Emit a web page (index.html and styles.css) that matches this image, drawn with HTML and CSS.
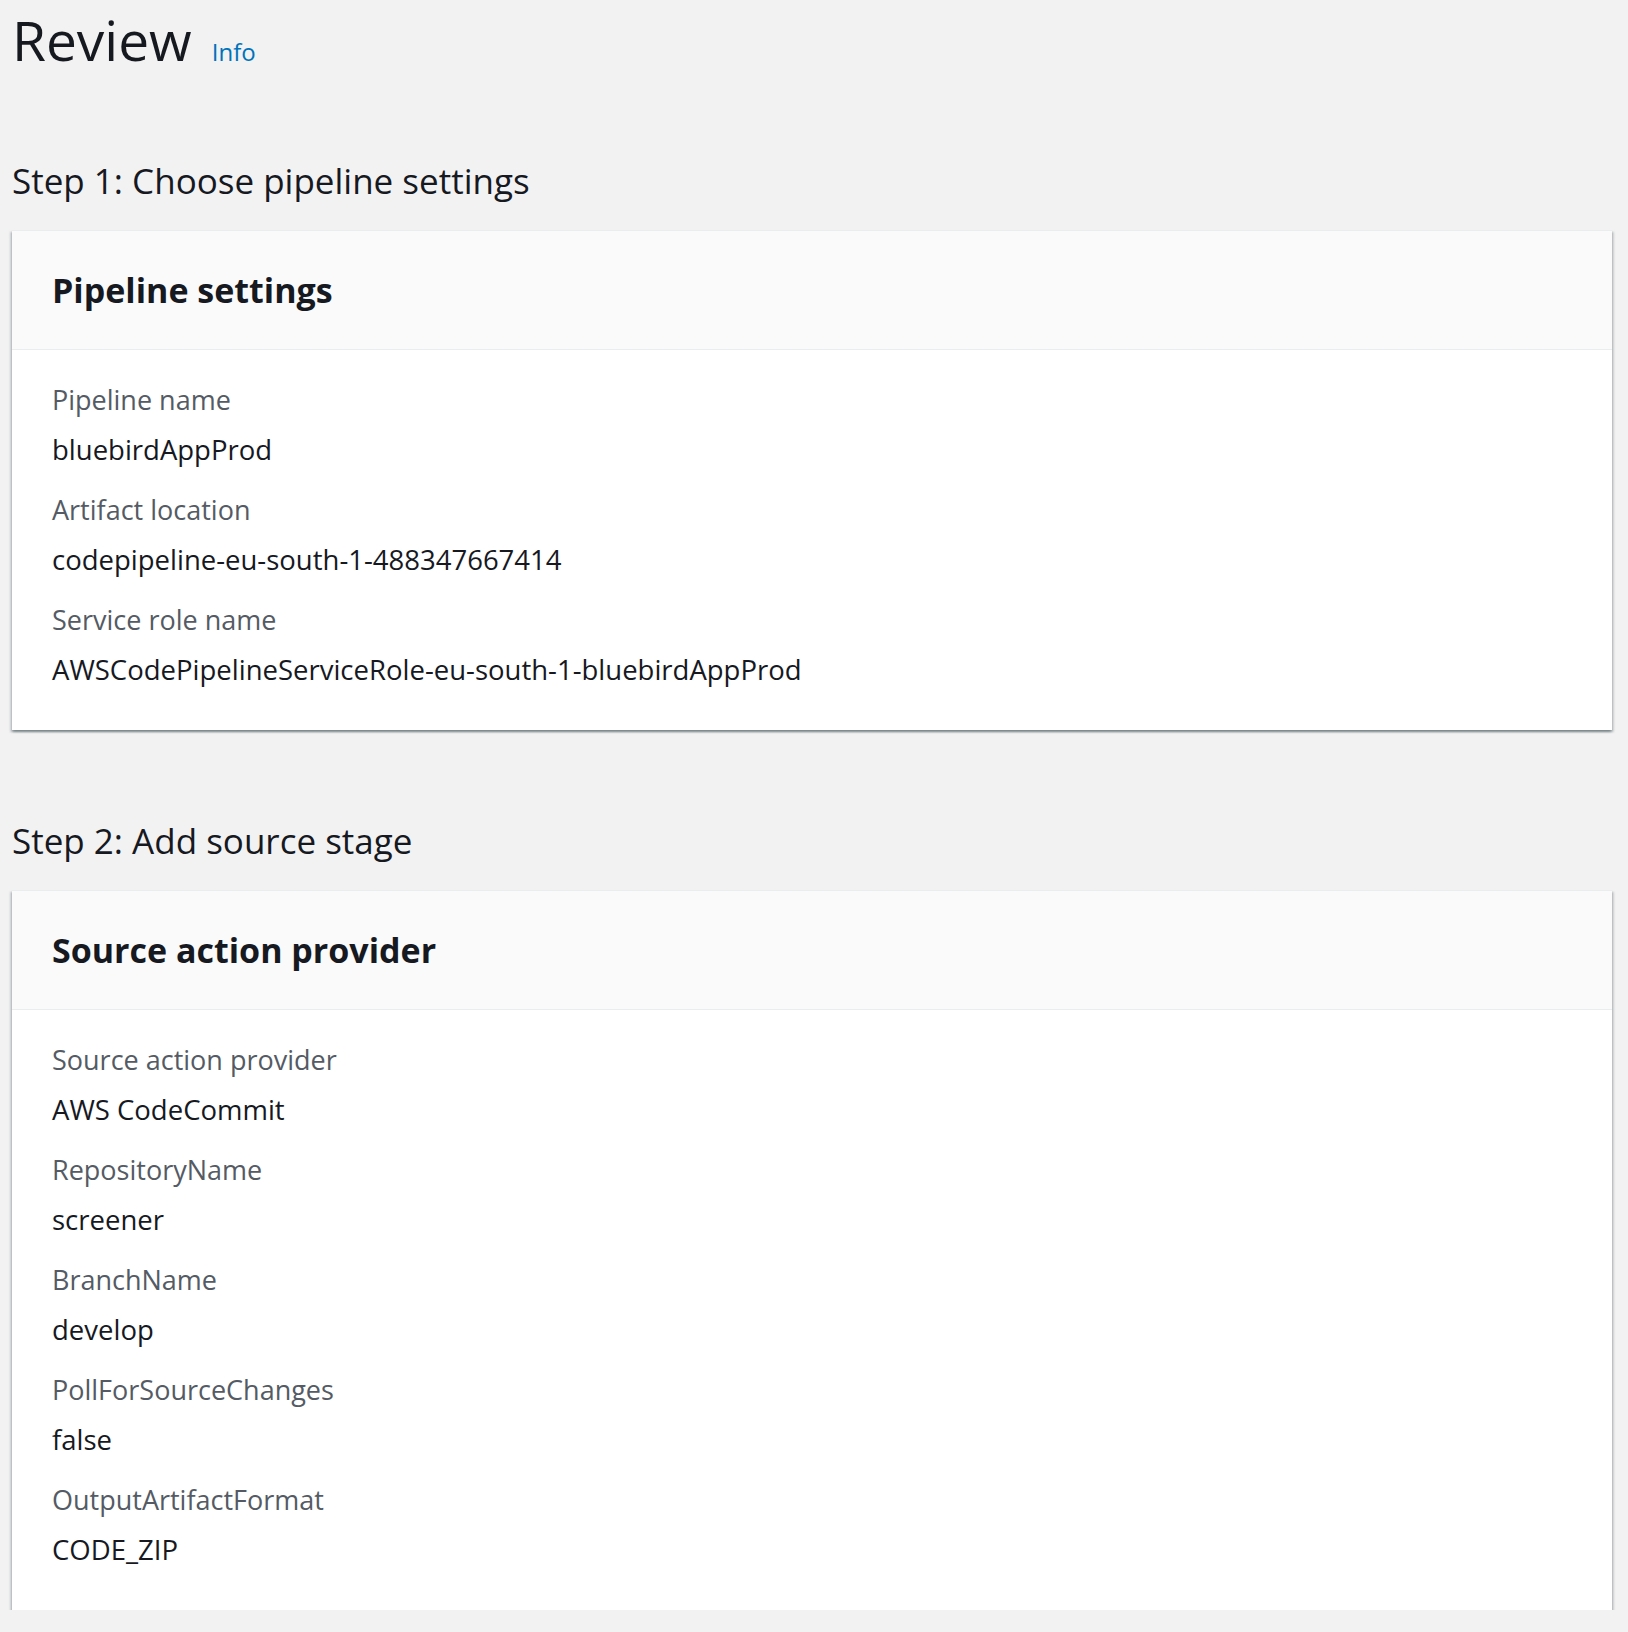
FILE: index.html
```html
<!DOCTYPE html>
<html lang="en">
<head>
<meta charset="utf-8">
<title>Review</title>
<link rel="stylesheet" href="styles.css">
</head>
<body>
<main class="page">
  <header class="page-header">
    <h1 class="page-title">Review</h1>
    <a class="info-link" href="#">Info</a>
  </header>

  <section class="step">
    <h2 class="step-title">Step 1: Choose pipeline settings</h2>
    <div class="card">
      <div class="card-header"><h3 class="card-title">Pipeline settings</h3></div>
      <dl class="card-body">
        <div class="kv"><dt class="kv-label">Pipeline name</dt><dd class="kv-value">bluebirdAppProd</dd></div>
        <div class="kv"><dt class="kv-label">Artifact location</dt><dd class="kv-value">codepipeline-eu-south-1-488347667414</dd></div>
        <div class="kv"><dt class="kv-label">Service role name</dt><dd class="kv-value">AWSCodePipelineServiceRole-eu-south-1-bluebirdAppProd</dd></div>
      </dl>
    </div>
  </section>

  <section class="step step-second">
    <h2 class="step-title">Step 2: Add source stage</h2>
    <div class="card">
      <div class="card-header"><h3 class="card-title">Source action provider</h3></div>
      <dl class="card-body">
        <div class="kv"><dt class="kv-label">Source action provider</dt><dd class="kv-value">AWS CodeCommit</dd></div>
        <div class="kv"><dt class="kv-label">RepositoryName</dt><dd class="kv-value">screener</dd></div>
        <div class="kv"><dt class="kv-label">BranchName</dt><dd class="kv-value">develop</dd></div>
        <div class="kv"><dt class="kv-label">PollForSourceChanges</dt><dd class="kv-value">false</dd></div>
        <div class="kv"><dt class="kv-label">OutputArtifactFormat</dt><dd class="kv-value">CODE_ZIP</dd></div>
      </dl>
    </div>
  </section>
</main>
</body>
</html>
```

FILE: styles.css
```css
html, body {
  margin: 0;
  padding: 0;
  background: #f2f2f2;
}

body {
  font-family: "Open Sans", "Noto Sans", "Liberation Sans", sans-serif;
  color: #16191f;
}

.page {
  padding: 0 16px 0 12px;
}

.page-header {
  display: flex;
  align-items: baseline;
  gap: 20px;
  height: 80px;
}

.page-title {
  margin: 0;
  font-size: 55px;
  line-height: 80px;
  font-weight: 400;
  color: #16191f;
}

.info-link {
  font-size: 24px;
  color: #0073bb;
  text-decoration: none;
}

.step {
  margin-top: 77px;
}

.step-second {
  margin-top: 87px;
}

.step-title {
  margin: 0 0 25px;
  font-size: 35px;
  line-height: 48px;
  font-weight: 400;
  color: #16191f;
}

.card {
  background: #ffffff;
  box-shadow: 0 2px 2px 0 rgba(0, 28, 36, 0.3), 2px 2px 2px 0 rgba(0, 28, 36, 0.15), -2px 2px 2px 0 rgba(0, 28, 36, 0.15);
  border-top: 1px solid #eaeded;
}

.card-header {
  background: #fafafa;
  border-bottom: 1px solid #eaeded;
  padding: 35px 40px 35px;
}

.card-title {
  margin: 0;
  font-size: 34px;
  line-height: 48px;
  font-weight: 700;
  color: #16191f;
}

.card-body {
  margin: 0;
  padding: 30px 40px 40px;
  display: flex;
  flex-direction: column;
  gap: 20px;
}

.kv {
  display: flex;
  flex-direction: column;
  gap: 10px;
}

.kv-label {
  font-size: 27px;
  line-height: 40px;
  color: #545b64;
}

.kv-value {
  margin: 0;
  font-size: 27.5px;
  line-height: 40px;
  color: #16191f;
}
```
